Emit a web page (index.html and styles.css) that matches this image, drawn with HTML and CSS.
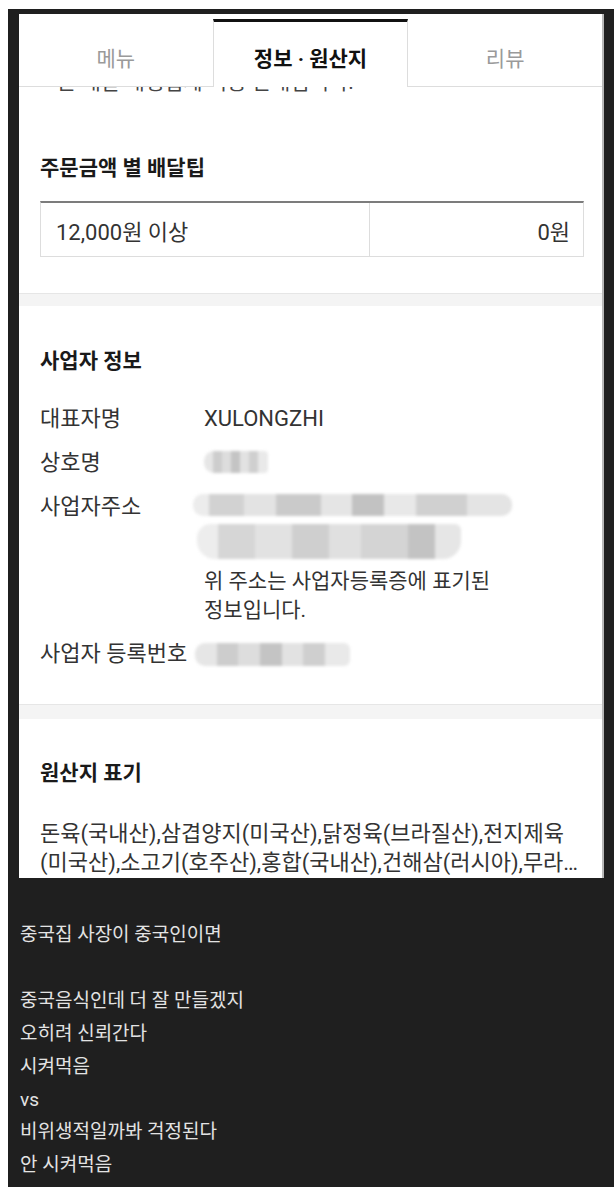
FILE: index.html
```html
<!DOCTYPE html>
<html>
  <head>
    <meta charset="UTF-8" />
    <title>정보 · 원산지</title>
    <link rel="stylesheet" href="styles.css">
  </head>

  <body>
    <div class="frame">
      <div class="panel">
        <div class="tabs">
          <div class="tab">메뉴</div>
          <div class="tab active">정보 · 원산지</div>
          <div class="tab">리뷰</div>
        </div>
        <div class="peek"><span>은 배달 대행업체 이용 안내입니다.</span></div>

        <section class="section tips">
          <h2>주문금액 별 배달팁</h2>
          <table class="tip-table">
            <tr>
              <td class="range">12,000원 이상</td>
              <td class="amount">0원</td>
            </tr>
          </table>
        </section>

        <div class="band"></div>

        <section class="section business">
          <h2>사업자 정보</h2>
          <dl class="info">
            <div class="row">
              <dt>대표자명</dt>
              <dd>XULONGZHI</dd>
            </div>
            <div class="row">
              <dt>상호명</dt>
              <dd><div class="blur blur-name"></div></dd>
            </div>
            <div class="row">
              <dt>사업자주소</dt>
              <dd>
                <div class="blur blur-addr1"></div>
                <div class="blur blur-addr2"></div>
                <p class="note">위 주소는 사업자등록증에 표기된 정보입니다.</p>
              </dd>
            </div>
            <div class="row">
              <dt>사업자 등록번호</dt>
              <dd><div class="blur blur-number"></div></dd>
            </div>
          </dl>
        </section>

        <div class="band band-tall"></div>

        <section class="section origin">
          <h2>원산지 표기</h2>
          <p class="origin-text">돈육(국내산),삼겹양지(미국산),닭정육(브라질산),전지제육(미국산),소고기(호주산),홍합(국내산),건해삼(러시아),무라사키성게(일본산),오징어(페루산),새우(베트남산)</p>
        </section>
      </div>

      <div class="post">
        중국집 사장이 중국인이면<br>
        <br>
        중국음식인데 더 잘 만들겠지<br>
        오히려 신뢰간다<br>
        시켜먹음<br>
        vs<br>
        비위생적일까봐 걱정된다<br>
        안 시켜먹음
      </div>
    </div>
  </body>
</html>
```

FILE: styles.css
```css
body {
  margin: 9px 0 0 8px;
  font-family: Roboto, "Noto Sans CJK KR", sans-serif;
}

.frame {
  background-color: #1f1f1f;
  padding: 5px 10px 5px 11px;
}

.panel {
  background-color: #fff;
  width: 583px;
  border-right: 2px solid #b8b8b8;
  padding-bottom: 1px;
  color: #333;
}

/* tabs */
.tabs {
  display: flex;
  padding-top: 5px;
  border-bottom: 1px solid #ddd;
}

.tab {
  flex: 1;
  height: 58px;
  padding-top: 6px;
  border-top: 3px solid transparent;
  display: flex;
  align-items: center;
  justify-content: center;
  font-size: 21px;
  color: #9a9a9a;
}

.tab.active {
  border-top-color: #111;
  border-left: 1px solid #ddd;
  border-right: 1px solid #ddd;
  margin-bottom: -1px;
  padding-bottom: 1px;
  background-color: #fff;
  color: #111;
  font-weight: bold;
}

.peek {
  height: 6px;
  overflow: hidden;
  padding-left: 38px;
}

.peek span {
  display: block;
  margin-top: -15px;
  font-size: 21px;
  line-height: 20px;
  color: #444;
}

/* sections */
.section {
  padding: 0 18px 0 21px;
}

.section h2 {
  margin: 0;
  font-size: 21px;
  line-height: 28px;
  font-weight: bold;
  color: #1a1a1a;
}

.tips {
  padding-top: 61px;
  padding-bottom: 36px;
}

.business {
  padding-top: 41px;
  padding-bottom: 35px;
}

.origin {
  padding-top: 40px;
}

.band {
  height: 12px;
  background-color: #f4f4f4;
  border-top: 1px solid #e6e6e6;
}

.band-tall {
  height: 14px;
}

/* delivery tip table */
.tip-table {
  width: 544px;
  margin-top: 19px;
  table-layout: fixed;
  border-spacing: 0;
  border-top: 2px solid #7c7c7c;
  border-left: 1px solid #ddd;
  border-right: 1px solid #ddd;
  border-bottom: 1px solid #ddd;
  font-size: 22px;
  color: #333;
}

.tip-table td {
  height: 53px;
  padding: 0;
}

.tip-table .range {
  width: 313px;
  padding-left: 15px;
}

.tip-table .amount {
  border-left: 1px solid #ddd;
  text-align: right;
  padding-right: 13px;
}

/* business info */
.info {
  margin: 29px 0 0;
}

.info .row {
  display: flex;
  font-size: 22px;
  line-height: 30px;
}

.info .row + .row {
  margin-top: 14px;
}

.info dt {
  width: 164px;
  flex-shrink: 0;
}

.info dd {
  margin: 0;
}

.note {
  margin: 8px 0 0;
  width: 330px;
  font-size: 21px;
  line-height: 29px;
  word-break: keep-all;
}

.blur {
  background-color: #d8d8d8;
  background-image: linear-gradient(90deg, #e6e6e6 0 14%, #cdcdcd 14% 28%, #dddddd 28% 42%, #c4c4c4 42% 56%, #e2e2e2 56% 70%, #cfcfcf 70% 84%, #e9e9e9 84%);
  border-radius: 10px;
  filter: blur(1.5px);
}

.blur-name {
  width: 64px;
  height: 22px;
  margin-top: 3px;
  border-radius: 10px 4px 4px 10px;
}

.blur-addr1 {
  width: 319px;
  height: 22px;
  margin: 2px 0 0 -11px;
  background-image: linear-gradient(90deg, #ececec 0 5%, #d2d2d2 5% 16%, #e3e3e3 16% 26%, #cacaca 26% 40%, #e5e5e5 40% 50%, #c2c2c2 50% 60%, #e8e8e8 60% 70%, #d0d0d0 70% 86%, #e4e4e4 86%);
}

.blur-addr2 {
  width: 264px;
  height: 35px;
  margin: 8px 0 0 -7px;
  border-radius: 14px 6px 18px 18px;
  background-image: linear-gradient(90deg, #ededed 0 8%, #d6d6d6 8% 22%, #e2e2e2 22% 36%, #cfcfcf 36% 50%, #e0e0e0 50% 62%, #d4d4d4 62% 80%, #c3c3c3 80% 90%, #e6e6e6 90%);
}

.blur-number {
  width: 155px;
  height: 23px;
  margin: 4px 0 0 -9px;
  border-radius: 10px 6px 6px 10px;
}

/* origin */
.origin-text {
  margin: 32px 0 0;
  font-size: 22px;
  line-height: 29px;
  color: #333;
  display: -webkit-box;
  -webkit-line-clamp: 2;
  -webkit-box-orient: vertical;
  overflow: hidden;
}

/* post text below the capture */
.post {
  padding: 41px 0 0 1px;
  font-size: 19px;
  line-height: 32.9px;
  color: #e3e3e3;
}
```
